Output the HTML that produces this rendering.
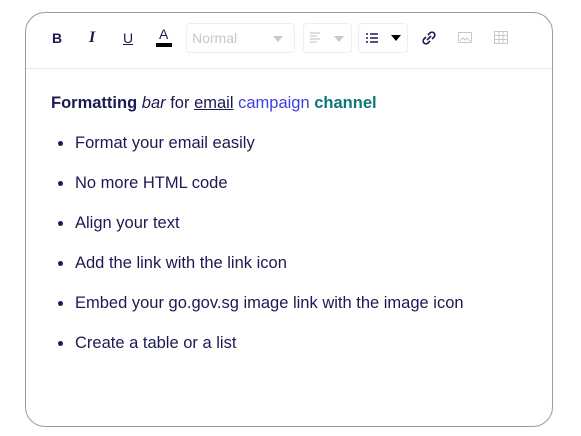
<!DOCTYPE html>
<html><head><style>
body{margin:0;width:581px;height:436px;background:#fff;font-family:"Liberation Sans",sans-serif;position:relative;overflow:hidden}
.box{position:absolute;left:25px;top:12px;width:526px;height:413px;border:1px solid #9a9ba3;border-radius:20px}
.tb{position:absolute;left:0;top:0;width:526px;height:55px;border-bottom:1px solid #e6e7ea}
.i{position:absolute;font-size:14px;font-weight:bold;color:#1b1a52}
.sel{position:absolute;top:10px;height:30px;border:1px solid #eeeef1;border-radius:4px;box-sizing:border-box}
.tri{position:absolute;width:0;height:0;border-left:5px solid transparent;border-right:5px solid transparent;border-top:6px solid #c8c9d0}
.t{position:absolute;left:25px;font-size:16.5px;color:#1b1a52;white-space:nowrap}
.dot{position:absolute;left:32px;width:5px;height:5px;border-radius:50%;background:#1b1a52}
.li{position:absolute;left:49px;font-size:16.5px;color:#1b1a52;white-space:nowrap}
</style></head><body>
<div class="box">
<div class="tb">
<div class="i" style="left:26px;top:17px">B</div>
<div class="i" style="left:63px;top:16px;font-style:italic;font-family:'Liberation Serif',serif;font-size:16px">I</div>
<div class="i" style="left:97px;top:17px;font-weight:normal;text-decoration:underline">U</div>
<div class="i" style="left:133px;top:13px;font-weight:normal;font-size:14px">A</div>
<div style="position:absolute;left:130px;top:30px;width:16px;height:4px;background:#000"></div>
<div class="sel" style="left:160px;width:109px"><span style="position:absolute;left:5px;top:6px;font-size:14px;color:#c8c9d0">Normal</span><div class="tri" style="left:86px;top:12px"></div></div>
<div class="sel" style="left:277px;width:49px"><svg style="position:absolute;left:6px;top:8px" width="12" height="12"><path d="M0 1h10M0 4h7M0 7h10M0 10h7" stroke="#c8c9d0" stroke-width="1.2"/></svg><div class="tri" style="left:30px;top:12px"></div></div>
<div class="sel" style="left:332px;width:50px"><svg style="position:absolute;left:7px;top:9px" width="12" height="10"><path d="M0 1h2M0 5h2M0 9h2M4 1h8M4 5h8M4 9h8" stroke="#1b1a52" stroke-width="1.4"/></svg><div class="tri" style="left:32px;top:11px;border-top-color:#000"></div></div>
<svg style="position:absolute;left:396px;top:18px" width="14" height="14" viewBox="0 0 14 14"><path d="M6 4l2-2a2.5 2.5 0 0 1 4 4l-2 2M8 10l-2 2a2.5 2.5 0 0 1-4-4l2-2M5 9l4-4" fill="none" stroke="#1b1a52" stroke-width="1.6"/></svg>
<svg style="position:absolute;left:432px;top:19px" width="14" height="12"><rect x="0.5" y="0.5" width="13" height="10" fill="none" stroke="#c8c9d0"/><path d="M2 9l3-3 2 2 2-2 3 3" fill="none" stroke="#c8c9d0"/></svg>
<svg style="position:absolute;left:468px;top:18px" width="14" height="13"><rect x="0.5" y="0.5" width="13" height="12" fill="none" stroke="#c8c9d0"/><path d="M0 4.5h14M0 8.5h14M5 0v13M9 0v13" stroke="#c8c9d0"/></svg>
</div>
<div class="t" style="top:81px"><b>Formatting</b> <i>bar</i> for <u>email</u> <span style="color:#3f3fe0">campaign</span> <b style="color:#0f7679">channel</b></div>
<div class="dot" style="top:128px"></div><div class="li" style="top:121px">Format your email easily</div>
<div class="dot" style="top:168px"></div><div class="li" style="top:161px">No more HTML code</div>
<div class="dot" style="top:208px"></div><div class="li" style="top:201px">Align your text</div>
<div class="dot" style="top:248px"></div><div class="li" style="top:241px">Add the link with the link icon</div>
<div class="dot" style="top:288px"></div><div class="li" style="top:281px">Embed your go.gov.sg image link with the image icon</div>
<div class="dot" style="top:328px"></div><div class="li" style="top:321px">Create a table or a list</div>
</div>
</body></html>
